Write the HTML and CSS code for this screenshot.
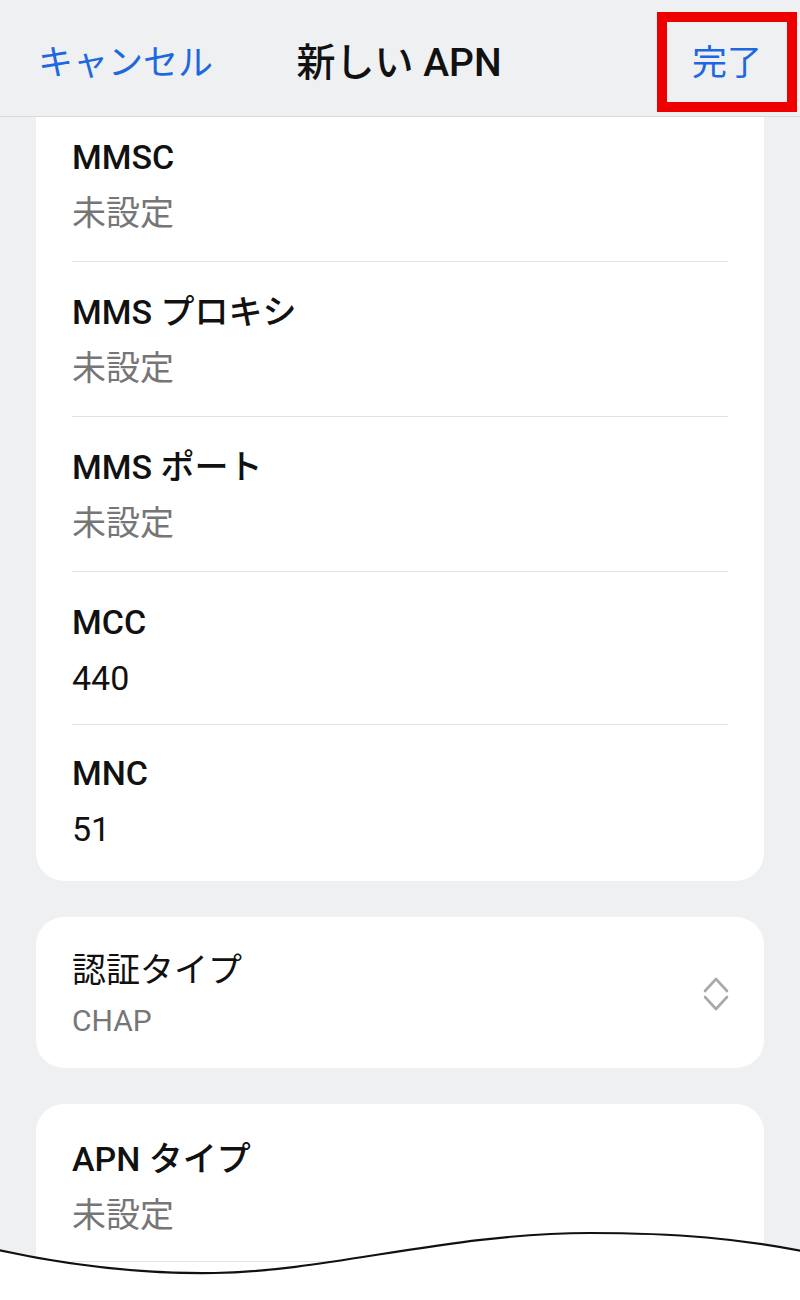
FILE: index.html
```html
<!DOCTYPE html>
<html lang="ja">
<head>
<meta charset="utf-8">
<title>新しい APN</title>
<link rel="stylesheet" href="styles.css">
</head>
<body>
<div class="screen">
  <header class="topbar">
    <span class="action cancel">キャンセル</span>
    <span class="title">新しい APN</span>
    <span class="action done">完了</span>
    <span class="highlight"></span>
  </header>
  <main class="content">
    <section class="card card-cut">
      <div class="row first">
        <div class="label">MMSC</div>
        <div class="value muted">未設定</div>
      </div>
      <div class="row">
        <div class="label">MMS プロキシ</div>
        <div class="value muted">未設定</div>
      </div>
      <div class="row">
        <div class="label">MMS ポート</div>
        <div class="value muted">未設定</div>
      </div>
      <div class="row short">
        <div class="label">MCC</div>
        <div class="value">440</div>
      </div>
      <div class="row last">
        <div class="label">MNC</div>
        <div class="value">51</div>
      </div>
    </section>
    <section class="card">
      <div class="row select">
        <div class="row-text">
          <div class="label">認証タイプ</div>
          <div class="value small muted">CHAP</div>
        </div>
        <svg class="updown" width="30" height="40" viewBox="0 0 30 40" aria-hidden="true">
          <path d="M4 17 L15 5 L26 17" fill="none" stroke="#a9a9a9" stroke-width="2.6" stroke-linecap="round" stroke-linejoin="round"/>
          <path d="M4 23 L15 35 L26 23" fill="none" stroke="#a9a9a9" stroke-width="2.6" stroke-linecap="round" stroke-linejoin="round"/>
        </svg>
      </div>
    </section>
    <section class="card card-tall">
      <div class="row first-b">
        <div class="label">APN タイプ</div>
        <div class="value muted">未設定</div>
      </div>
      <div class="row next"></div>
    </section>
  </main>
  <svg class="tear" width="800" height="100" viewBox="0 0 800 100" preserveAspectRatio="none" aria-hidden="true">
    <path d="M-2,50 C80,68 150,74 215,73 C330,71 450,33 590,33 C680,33 740,39 802,51 L802,102 L-2,102 Z" fill="#ffffff" stroke="none"/>
    <path d="M-2,50 C80,68 150,74 215,73 C330,71 450,33 590,33 C680,33 740,39 802,51" fill="none" stroke="#111111" stroke-width="2.2"/>
  </svg>
</div>
</body>
</html>
```

FILE: styles.css
```css
* { box-sizing: border-box; }

html, body {
  margin: 0;
  padding: 0;
  background: #ffffff;
}

body {
  font-family: Roboto, "Noto Sans CJK JP", "Noto Sans", sans-serif;
  color: #111111;
}

.screen {
  position: relative;
  width: 800px;
  height: 1300px;
  overflow: hidden;
  background: #eff0f2;
}

.topbar {
  position: relative;
  height: 117px;
  display: grid;
  grid-template-columns: 1fr auto 1fr;
  align-items: center;
  padding: 10px 38px 0 38px;
  background: #eff0f2;
  border-bottom: 1px solid #d9dadc;
}

.action {
  font-size: 35px;
  color: #1d68e0;
  line-height: 1;
}

.cancel { justify-self: start; }
.done { justify-self: end; }

.title {
  font-size: 39px;
  font-weight: 500;
  color: #111111;
  line-height: 1;
  margin-left: -2px;
}

.highlight {
  position: absolute;
  left: 657px;
  top: 12px;
  width: 140px;
  height: 100px;
  border: 10px solid #ee0000;
}

.content {
  display: flex;
  flex-direction: column;
  gap: 36px;
  padding: 0 36px;
}

.card {
  background: #ffffff;
  border-radius: 28px;
  padding: 0 36px;
}

.card-cut {
  border-top-left-radius: 0;
  border-top-right-radius: 0;
}

.card-tall {
  min-height: 220px;
}

.row {
  display: flex;
  flex-direction: column;
  gap: 8px;
  padding: 26px 0 24px;
  border-top: 1px solid #e3e3e5;
}

.row.first {
  border-top: none;
  padding-top: 16px;
}

.row.short {
  padding-bottom: 22px;
}

.row.last {
  padding-top: 24px;
  padding-bottom: 28px;
}

.row.first-b {
  border-top: none;
  padding-top: 31px;
  padding-bottom: 22px;
}

.row.next {
  padding: 0;
  height: 40px;
}

.label {
  font-size: 34px;
  font-weight: 500;
  line-height: 48px;
  color: #111111;
}

.value {
  font-size: 34px;
  line-height: 48px;
  color: #111111;
}

.value.muted { color: #767676; }

.value.small {
  font-size: 30px;
  line-height: 42px;
}

.row.select {
  flex-direction: row;
  align-items: center;
  justify-content: space-between;
  border-top: none;
  padding: 29px 0 26px;
}

.row-text {
  display: flex;
  flex-direction: column;
  gap: 6px;
}

.select .label { font-weight: 400; }

.updown {
  margin-right: -3px;
}

.tear {
  position: absolute;
  left: 0;
  top: 1200px;
  display: block;
}
```
